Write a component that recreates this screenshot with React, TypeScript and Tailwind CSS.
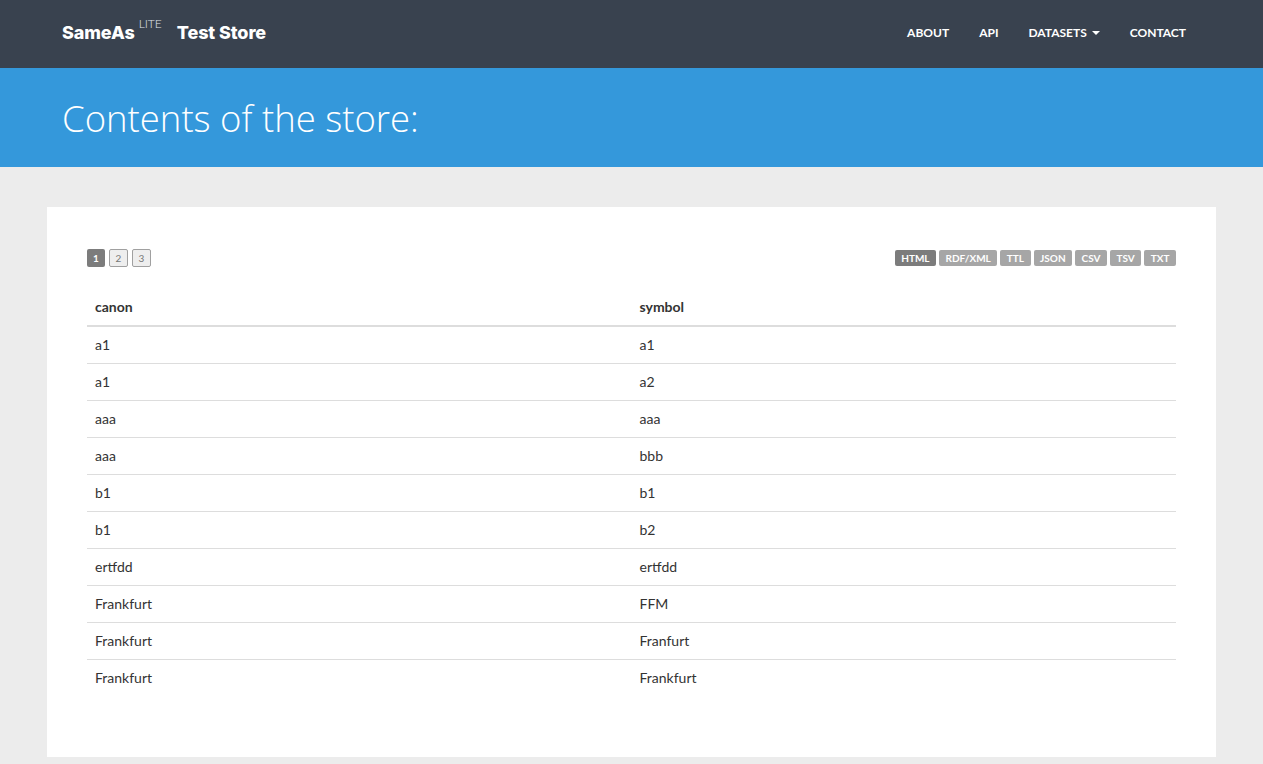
const rows: [string, string][] = [
  ['a1', 'a1'],
  ['a1', 'a2'],
  ['aaa', 'aaa'],
  ['aaa', 'bbb'],
  ['b1', 'b1'],
  ['b1', 'b2'],
  ['ertfdd', 'ertfdd'],
  ['Frankfurt', 'FFM'],
  ['Frankfurt', 'Franfurt'],
  ['Frankfurt', 'Frankfurt'],
];

const formats = ['HTML', 'RDF/XML', 'TTL', 'JSON', 'CSV', 'TSV', 'TXT'];

const App = () => {
  return (
    <div className="min-h-screen bg-[#ececec] font-['Lato','Liberation_Sans',sans-serif] text-[14px] text-[#333]">
      <nav className="h-[68px] bg-[#39424f]">
        <div className="flex h-full items-center justify-between pb-[3px] pl-[62px] pr-[77px]">
          <div className="flex items-start text-white">
            <span className="font-['Inter',sans-serif] text-[18px] font-extrabold tracking-[-0.1px]">SameAs</span>
            <span className="ml-[4px] -mt-[4px] text-[12px] font-light text-[#e0e4ea]">LITE</span>
            <span className="ml-[15px] font-['Inter',sans-serif] text-[18px] font-extrabold tracking-[-0.1px]">Test Store</span>
          </div>
          <ul className="flex items-center gap-[30px] text-[12px] font-bold uppercase text-white">
            <li>About</li>
            <li>API</li>
            <li className="flex items-center">
              Datasets
              <span className="ml-[5px] inline-block h-0 w-0 border-x-[4px] border-t-[4px] border-x-transparent border-t-white" />
            </li>
            <li>Contact</li>
          </ul>
        </div>
      </nav>

      <header className="h-[99px] bg-[#3498db]">
        <h1 className="pl-[62px] pt-[25px] font-['Open_Sans','Lato',sans-serif] text-[36.5px] font-light leading-[1.4] text-white">
          Contents of the store:
        </h1>
      </header>

      <main className="px-[47px] pt-[40px] pb-[8px]">
        <div className="bg-white px-[40px] pt-[42px] pb-[41px]">
          <div className="mb-[22px] flex items-center justify-between">
            <div className="flex gap-[4px]">
              <span className="flex h-[18px] w-[18px] items-center justify-center rounded-[2px] bg-[#7c7c7c] text-[10px] font-bold text-white">1</span>
              <span className="flex h-[18px] w-[19px] items-center justify-center rounded-[2px] border border-[#a0a0a0] bg-[#eeeeee] text-[10px] text-[#777]">2</span>
              <span className="flex h-[18px] w-[19px] items-center justify-center rounded-[2px] border border-[#a0a0a0] bg-[#eeeeee] text-[10px] text-[#777]">3</span>
            </div>
            <div className="flex gap-[3px]">
              {formats.map((f, i) => (
                <span
                  key={f}
                  className={`flex h-[16px] items-center rounded-[2px] px-[6.5px] text-[10px] font-bold text-white ${i === 0 ? 'bg-[#7c7c7c]' : 'bg-[#a6a6a6]'}`}
                >
                  {f}
                </span>
              ))}
            </div>
          </div>

          <table className="mb-[20px] w-full table-fixed border-collapse">
            <thead>
              <tr className="border-b-2 border-[#dddddd]">
                <th className="p-[8px] text-left font-bold leading-[20px]">canon</th>
                <th className="p-[8px] text-left font-bold leading-[20px]">symbol</th>
              </tr>
            </thead>
            <tbody>
              {rows.map(([a, b], i) => (
                <tr key={i} className={i > 0 ? 'border-t border-[#dddddd]' : ''}>
                  <td className="p-[8px] leading-[20px]">{a}</td>
                  <td className="p-[8px] leading-[20px]">{b}</td>
                </tr>
              ))}
            </tbody>
          </table>
        </div>
      </main>
    </div>
  );
};

export default App;
